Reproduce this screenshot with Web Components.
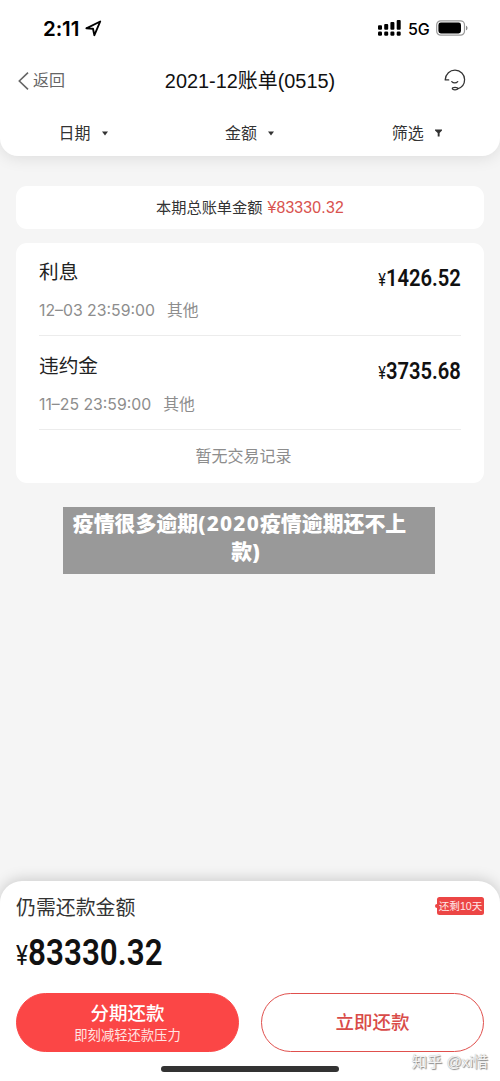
<!DOCTYPE html>
<html lang="zh-CN">
<head>
<meta charset="utf-8">
<title>账单</title>
<style>
html,body{margin:0;padding:0}
body{width:500px;height:1081px;overflow:hidden;background:#f5f5f5;font-family:"Liberation Sans","Noto Sans CJK SC",sans-serif;color:#333}
</style>
</head>
<body>
<bill-page></bill-page>
<script>
function define(name, html){
  const t=document.createElement('template');
  t.innerHTML=html;
  customElements.define(name,class extends HTMLElement{
    constructor(){super();this.attachShadow({mode:'open'}).appendChild(t.content.cloneNode(true));}
  });
}

define('status-bar',`<style>
:host{display:flex;height:56px;box-sizing:border-box;padding:0 32px 0 43px;align-items:center;color:#000}
.time{font:600 20.5px/24px Inter,sans-serif;letter-spacing:-.1px;width:38px;white-space:nowrap;margin-top:1px}
.loc{margin-left:4px;flex:none}
.sig{margin-left:auto}
.net{font:500 16px/20px Inter,sans-serif;width:22px;margin:1px 6px 0 7px;letter-spacing:-.1px}
svg{display:block}
</style>
<span class="time">2:11</span>
<svg class="loc" width="17" height="17" viewBox="0 0 17 17"><path d="M1.4 8.3 15.2 1.5 9.4 15.2 8 8.8Z" fill="none" stroke="#000" stroke-width="1.9" stroke-linejoin="round"/></svg>
<svg class="sig" width="24" height="18" viewBox="0 0 24 18"><g><rect x="1" y="6.2" width="4" height="4.5" rx="1"/><rect x="7.2" y="5" width="4" height="5.7" rx="1"/><rect x="13.4" y="3" width="4" height="7.7" rx="1"/><rect x="19.7" y="1" width="4" height="9.7" rx="1"/><rect x="1" y="12.5" width="4" height="4.3" rx="1.2"/><rect x="7.2" y="12.5" width="4" height="4.3" rx="1.2"/><rect x="13.4" y="12.5" width="4" height="4.3" rx="1.2"/><rect x="19.7" y="12.5" width="4" height="4.3" rx="1.2"/></g></svg>
<span class="net">5G</span>
<svg width="32" height="16" viewBox="0 0 32 16"><rect x=".7" y=".8" width="27.8" height="14.4" rx="4" fill="#fff" stroke="#999" stroke-width="1.2"/><rect x="2.4" y="2.6" width="22.6" height="10.8" rx="2.4"/><path d="M30 5.7c2 .7 2 3.9 0 4.6z" fill="#888"/></svg>`);

define('nav-bar',`<style>
:host{display:grid;grid-template-columns:100px 1fr 100px;align-items:center;height:50px}
.back{display:flex;align-items:center;padding-left:18px;font-size:16px;line-height:24px;color:#666;gap:4px}
.back slot{display:block}
h1{margin:0;font-size:19.9px;line-height:28px;font-weight:400;color:#111;text-align:center;white-space:nowrap}
.help{justify-self:end;margin-right:34px;display:block;position:relative;top:-1px}
</style>
<div class="back"><svg width="11" height="18" viewBox="0 0 11 18"><path d="M10 .6 1.3 9 10 17.4" fill="none" stroke="#666" stroke-width="1.6"/></svg><slot name="back"></slot></div>
<h1><slot></slot></h1>
<svg class="help" width="22" height="22" viewBox="0 0 22 22" fill="none" stroke="#333" stroke-width="1.25" stroke-linecap="round" stroke-linejoin="round"><path d="M4.7 10.9H1.2C1.6 4.8 6 1.2 11 1.2c5.5 0 9.6 4.2 9.6 9.4 0 4.6-2.7 8-7 9.2"/><path d="M7.8 12.6c1.5 1.8 4.4 1.8 5.9 0"/><ellipse cx="11" cy="19.6" rx="2.7" ry="1.2"/></svg>`);

define('filter-tab',`<style>
:host{display:flex;align-items:center;font-size:16px;line-height:24px;color:#333}
::slotted(svg){margin-left:11px;display:block;margin-top:-2px}
</style><slot></slot><slot name="mark"></slot>`);

define('page-header',`<style>
:host{display:block;height:156px;background:#fff;border-radius:0 0 18px 18px;box-shadow:0 2px 16px rgba(0,0,0,.1)}
.tabs{display:grid;grid-template-columns:repeat(3,166.6px);height:50px;padding-left:58.5px;box-sizing:border-box;align-items:center;margin-top:3px}
</style>
<status-bar></status-bar>
<nav-bar><span slot="back">返回</span>2021-12账单(0515)</nav-bar>
<div class="tabs">
<filter-tab>日期<svg slot="mark" width="6" height="5"><path d="M0 .5h6L3 4.5z" fill="#333"/></svg></filter-tab>
<filter-tab>金额<svg slot="mark" width="6" height="5"><path d="M0 .5h6L3 4.5z" fill="#333"/></svg></filter-tab>
<filter-tab>筛选<svg slot="mark" width="7" height="8"><path d="M0 .5h7v1L4.6 3.9v3.6H2.7V3.9L0 1.5z" fill="#333"/></svg></filter-tab>
</div>`);

define('bill-card',`<style>
:host{display:block;background:#fff;border-radius:11px;box-sizing:border-box}
</style><slot></slot>`);

define('money-text',`<style>
:host{display:block;color:#111;font-family:Roboto,sans-serif;font-weight:600;white-space:nowrap}
.in{display:inline-block;transform:scaleX(var(--sx,.82));transform-origin:var(--origin,right) center}
.cur{font-size:.72em;font-weight:400;margin-right:.01em}
</style><span class="in"><span class="cur">¥</span><slot></slot></span>`);

define('bill-row',`<style>
:host{display:flex;justify-content:space-between;height:78px;box-sizing:border-box;border-bottom:1px solid #ececec}
.name{font-size:19.7px;line-height:28px;color:#222}
.meta{display:flex;gap:12px;margin-top:13px;font:400 15.8px/24px Inter,"Noto Sans CJK SC",sans-serif;color:#8d8d8d;white-space:nowrap}
money-text{font-size:24.6px;line-height:28px;margin-top:var(--mt,6px)}
</style>
<div><div class="name"><slot name="name"></slot></div><div class="meta"><slot name="time"></slot><slot name="kind"></slot></div></div>
<money-text><slot></slot></money-text>`);

define('pay-button',`<style>
:host{display:flex;flex-direction:column;align-items:center;justify-content:center;height:59px;box-sizing:border-box;border-radius:30px;border:1.5px solid #e0504d;color:#d94b48;font-size:18.5px;line-height:26px;font-weight:500;padding-top:1px}
:host([primary]){background:#fb4646;border-color:#fb4646;color:#fff}
::slotted(small){font-size:13.3px;line-height:18px;font-weight:400;color:#ffe5e3}
</style><slot></slot><slot name="note"></slot>`);

define('days-badge',`<style>
:host{display:flex;position:relative;width:47px;height:18px;background:#ec4645;border-radius:2.5px;align-items:center;justify-content:center;color:#ffe9e8;font-size:10.6px;line-height:18px;white-space:nowrap}
:host::before{content:"";position:absolute;left:-2px;top:7px;width:4px;height:4px;border-radius:2px;background:#ec4645}
</style><slot></slot>`);

define('pay-sheet',`<style>
:host{display:flex;flex-direction:column;box-sizing:border-box;height:200px;padding:13px 16px 0;background:#fff;border-radius:22px 22px 0 0;box-shadow:0 -2px 14px rgba(0,0,0,.17)}
.top{display:flex;justify-content:space-between;height:28px;font-size:19.9px;line-height:28px;color:#333}
days-badge{margin-top:3px}
money-text{height:44px;font-size:37.4px;line-height:44px;margin-top:8px;--sx:.84;--origin:left}
.actions{display:grid;grid-template-columns:223px 223px;justify-content:space-between;margin-top:19px}
.home{width:178px;height:6px;border-radius:3px;background:#333;margin:14px auto 0}
</style>
<div class="top"><span>仍需还款金额</span><days-badge>还剩10天</days-badge></div>
<money-text>83330.32</money-text>
<div class="actions"><pay-button primary>分期还款<small slot="note">即刻减轻还款压力</small></pay-button><pay-button>立即还款</pay-button></div>
<div class="home"></div>`);

define('title-overlay',`<style>
:host{display:block;width:372px;height:67px;background:#999;color:#fff;text-align:center;font:900 20.9px/28px "Noto Sans","Noto Sans CJK SC",sans-serif;box-sizing:border-box;padding:2px 7px 0 0;white-space:nowrap}
::slotted(.first){display:block;margin-right:12px}
::slotted(.last){display:block}
</style><slot></slot>`);

define('bill-page',`<style>
:host{display:flex;flex-direction:column;position:relative;width:500px;height:1081px;background:#f5f5f5;overflow:hidden}
main{flex:1;padding:30px 16px 0}
.sum{height:43px;display:flex;align-items:center;justify-content:center;font-size:15.2px;color:#333;white-space:nowrap;gap:5px;line-height:22px}
.sum span{color:#d9534f;font-size:15.8px;letter-spacing:.2px}
.list{height:240px;margin-top:14px;padding:15px 23px 0}
bill-row+bill-row{margin-top:16px;--mt:5px}
.none{text-align:center;font-size:16px;line-height:24px;color:#8d8d8d;margin-top:15px;padding-right:13px}
title-overlay{position:absolute;left:63px;top:507px}
.num{letter-spacing:1.25px;font-weight:800}
.mark{position:absolute;right:12px;top:1051px;font-size:15.2px;line-height:22px;color:#f4f4f4;text-shadow:1px 1px 1px #888,0 0 1px #aaa;white-space:nowrap}
</style>
<page-header></page-header>
<main>
<bill-card class="sum">本期总账单金额<span>¥83330.32</span></bill-card>
<bill-card class="list">
<bill-row><span slot="name">利息</span><span slot="time">12–03 23:59:00</span><span slot="kind">其他</span>1426.52</bill-row>
<bill-row><span slot="name">违约金</span><span slot="time">11–25 23:59:00</span><span slot="kind">其他</span>3735.68</bill-row>
<div class="none">暂无交易记录</div>
</bill-card>
</main>
<pay-sheet></pay-sheet>
<title-overlay><span class="first">疫情很多逾期<span class="num">(2020</span>疫情逾期还不上</span><span class="last">款)</span></title-overlay>
<div class="mark">知乎 @xi惜</div>`);
</script>
</body>
</html>
